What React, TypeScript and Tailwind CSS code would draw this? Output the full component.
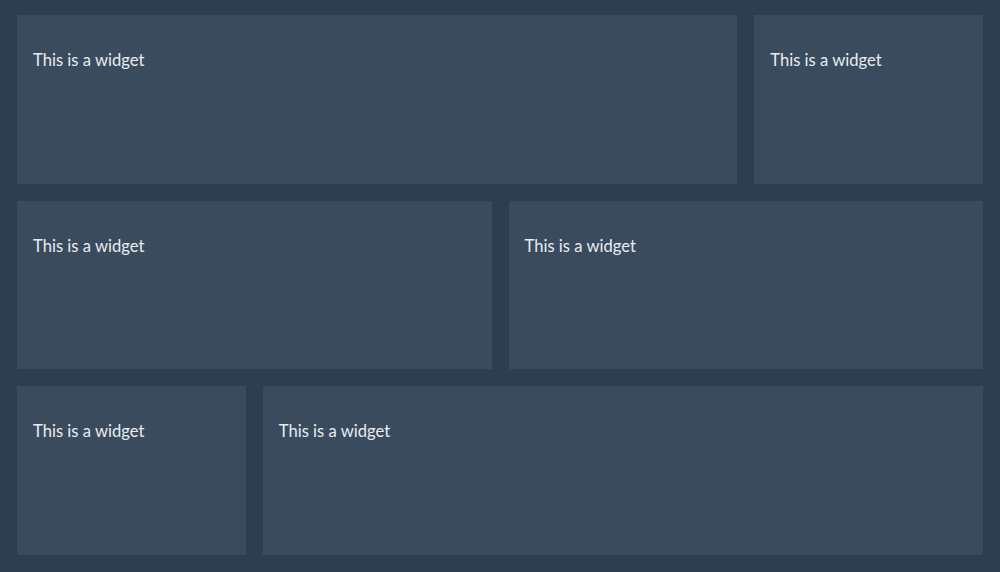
import React from "react";

const spans = ["col-span-3", "col-span-1", "col-span-2", "col-span-2", "col-span-1", "col-span-3"];

export default function App() {
  return (
    <div className="h-[572px] w-full bg-[#2f3e4f] px-[17px] pt-[15px] pb-[17px] grid grid-cols-4 grid-rows-3 gap-[17px]" style={{ fontFamily: "Lato, 'Open Sans', sans-serif" }}>
      {spans.map((s, i) => (
        <div key={i} className={`${s} bg-[#3a4b5e] pl-[16px] pt-[35px] text-[16.6px] leading-[20px] text-[#e8ecf0]`}>
          This is a widget
        </div>
      ))}
    </div>
  );
}
